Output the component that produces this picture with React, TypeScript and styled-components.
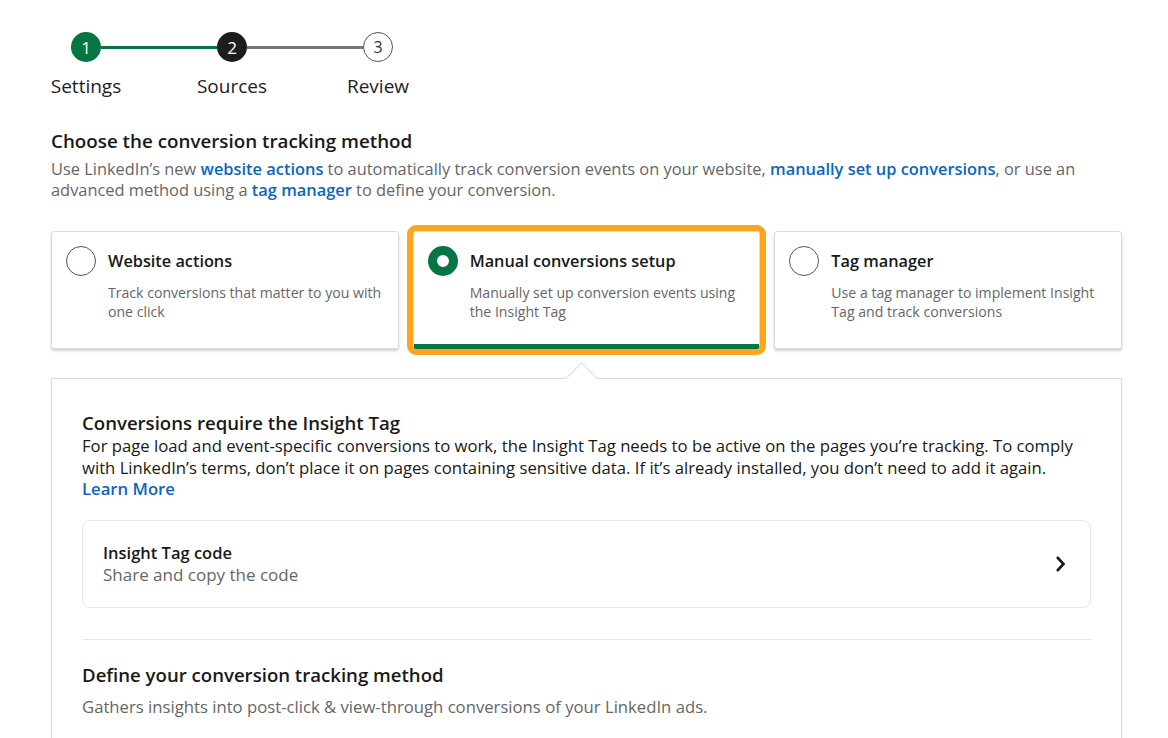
import React, { useState } from "react";
import styled, { createGlobalStyle, css } from "styled-components";

const GlobalStyle = createGlobalStyle`
  body {
    margin: 0;
    background: #ffffff;
    font-family: "Open Sans", "Noto Sans", sans-serif;
    color: #191919;
  }
`;

const Page = styled.div`
  padding: 32px 46px 0 51px;
  overflow: hidden;
  height: 738px;
  box-sizing: border-box;
`;

const Stepper = styled.div`
  display: grid;
  grid-template-columns: 30px 116px 30px 116px 30px;
  grid-template-rows: 30px auto;
  row-gap: 12px;
  align-items: center;
  margin-left: 20px;
`;

const StepDot = styled.div<{ $state: "done" | "active" | "todo" }>`
  width: 30px;
  height: 30px;
  box-sizing: border-box;
  border-radius: 50%;
  display: flex;
  align-items: center;
  justify-content: center;
  font-size: 17px;
  ${(p) =>
    p.$state === "done"
      ? css`
          background: #057642;
          color: #fff;
        `
      : p.$state === "active"
      ? css`
          background: #1d1d1d;
          color: #fff;
        `
      : css`
          border: 1px solid #555;
          color: #333;
          font-size: 16px;
        `}
`;

const Connector = styled.div<{ $done?: boolean }>`
  height: 3px;
  background: ${(p) => (p.$done ? "#057642" : "#767676")};
`;

const StepLabel = styled.div<{ $col: number }>`
  grid-row: 2;
  grid-column: ${(p) => p.$col};
  justify-self: center;
  white-space: nowrap;
  font-size: 19px;
  line-height: 24px;
  color: #1d1d1d;
`;

const Heading = styled.h2`
  margin: 31px 0 5px;
  font-size: 18.8px;
  line-height: 24px;
  font-weight: 600;
  color: #191919;
`;

const Intro = styled.p`
  margin: 0;
  font-size: 16.4px;
  line-height: 21px;
  color: #666;
`;

const Link = styled.a`
  color: #0a66c2;
  font-weight: 600;
  text-decoration: none;
`;

const Options = styled.div`
  display: grid;
  grid-template-columns: repeat(3, 1fr);
  gap: 14px;
  margin-top: 31px;
`;

const OptionCard = styled.div<{ $selected?: boolean }>`
  height: 118px;
  box-sizing: border-box;
  padding: 14px 10px 0 14px;
  display: grid;
  grid-template-columns: 30px 1fr;
  align-content: start;
  column-gap: 12px;
  background: #fff;
  border: 1px solid #dcdcdc;
  border-radius: 3px;
  box-shadow: 0 2px 3px rgba(0, 0, 0, 0.18);
  cursor: pointer;
  ${(p) =>
    p.$selected &&
    css`
      outline: 6px solid #ffa41c;
      outline-offset: 0;
      border-bottom: 5px solid #057642;
    `}
`;

const Radio = styled.span<{ $checked?: boolean }>`
  width: 30px;
  height: 30px;
  box-sizing: border-box;
  border-radius: 50%;
  background: #fff;
  border: ${(p) => (p.$checked ? "9px solid #057642" : "1px solid #555")};
`;

const OptionTitle = styled.div`
  font-size: 16.3px;
  line-height: 30px;
  font-weight: 600;
  color: #191919;
`;

const OptionDesc = styled.div`
  grid-column: 2;
  margin-top: 7px;
  font-size: 14.1px;
  line-height: 19px;
  color: #666;
`;

const Panel = styled.div`
  position: relative;
  margin-top: 29px;
  border: 1px solid #dcdcdc;
  border-bottom: none;
  box-shadow: 0 0 2px rgba(0, 0, 0, 0.08);
  padding: 32px 30px 40px;
  background: #fff;

  &::before {
    content: "";
    position: absolute;
    top: -12px;
    left: 518px;
    width: 22px;
    height: 22px;
    background: #fff;
    border-top: 1px solid #dcdcdc;
    border-left: 1px solid #dcdcdc;
    transform: rotate(45deg);
  }
`;

const PanelTitle = styled.h3`
  margin: 0;
  font-size: 18.6px;
  line-height: 24px;
  font-weight: 600;
  color: #191919;
`;

const PanelText = styled.p`
  margin: 0;
  font-size: 16.7px;
  line-height: 21.5px;
  color: #191919;
`;

const CodeRow = styled.div`
  margin-top: 20px;
  height: 88px;
  box-sizing: border-box;
  border: 1px solid #e6e6e6;
  border-radius: 8px;
  padding: 0 24px 0 20px;
  display: flex;
  align-items: center;
  justify-content: space-between;
  cursor: pointer;
`;

const CodeTitle = styled.div`
  font-size: 16.5px;
  line-height: 22px;
  font-weight: 600;
  color: #191919;
`;

const CodeSub = styled.div`
  font-size: 17px;
  line-height: 22px;
  color: #666;
`;

const Divider = styled.hr`
  margin: 31px 0 23px;
  border: none;
  border-top: 1px solid #e6e6e6;
`;

const SubNote = styled.p`
  margin: 9px 0 0;
  font-size: 16.7px;
  line-height: 22px;
  color: #666;
`;

const Chevron = () => (
  <svg width="12" height="18" viewBox="0 0 12 18" aria-hidden>
    <polyline
      points="3,2 9.5,9 3,16"
      fill="none"
      stroke="#191919"
      strokeWidth="2.6"
      strokeLinejoin="miter"
    />
  </svg>
);

const options = [
  {
    id: "website",
    title: "Website actions",
    desc: "Track conversions that matter to you with one click",
  },
  {
    id: "manual",
    title: "Manual conversions setup",
    desc: "Manually set up conversion events using the Insight Tag",
  },
  {
    id: "tag",
    title: "Tag manager",
    desc: "Use a tag manager to implement Insight Tag and track conversions",
  },
];

const App = () => {
  const [selected, setSelected] = useState("manual");

  return (
    <>
      <GlobalStyle />
      <Page>
        <Stepper>
          <StepDot $state="done">1</StepDot>
          <Connector $done />
          <StepDot $state="active">2</StepDot>
          <Connector />
          <StepDot $state="todo">3</StepDot>
          <StepLabel $col={1}>Settings</StepLabel>
          <StepLabel $col={3}>Sources</StepLabel>
          <StepLabel $col={5}>Review</StepLabel>
        </Stepper>

        <Heading>Choose the conversion tracking method</Heading>
        <Intro>
          Use LinkedIn’s new <Link href="#">website actions</Link> to
          automatically track conversion events on your website,{" "}
          <Link href="#">manually set up conversions</Link>, or use an advanced
          method using a <Link href="#">tag manager</Link> to define your
          conversion.
        </Intro>

        <Options>
          {options.map((o) => (
            <OptionCard
              key={o.id}
              $selected={selected === o.id}
              onClick={() => setSelected(o.id)}
            >
              <Radio $checked={selected === o.id} />
              <OptionTitle>{o.title}</OptionTitle>
              <OptionDesc>{o.desc}</OptionDesc>
            </OptionCard>
          ))}
        </Options>

        <Panel>
          <PanelTitle>Conversions require the Insight Tag</PanelTitle>
          <PanelText>
            For page load and event-specific conversions to work, the Insight
            Tag needs to be active on the pages you’re tracking. To comply with
            LinkedIn’s terms, don’t place it on pages containing sensitive data.
            If it’s already installed, you don’t need to add it again.
            <br />
            <Link href="#">Learn More</Link>
          </PanelText>

          <CodeRow>
            <div>
              <CodeTitle>Insight Tag code</CodeTitle>
              <CodeSub>Share and copy the code</CodeSub>
            </div>
            <Chevron />
          </CodeRow>

          <Divider />

          <PanelTitle>Define your conversion tracking method</PanelTitle>
          <SubNote>
            Gathers insights into post-click &amp; view-through conversions of
            your LinkedIn ads.
          </SubNote>
        </Panel>
      </Page>
    </>
  );
};

export default App;
